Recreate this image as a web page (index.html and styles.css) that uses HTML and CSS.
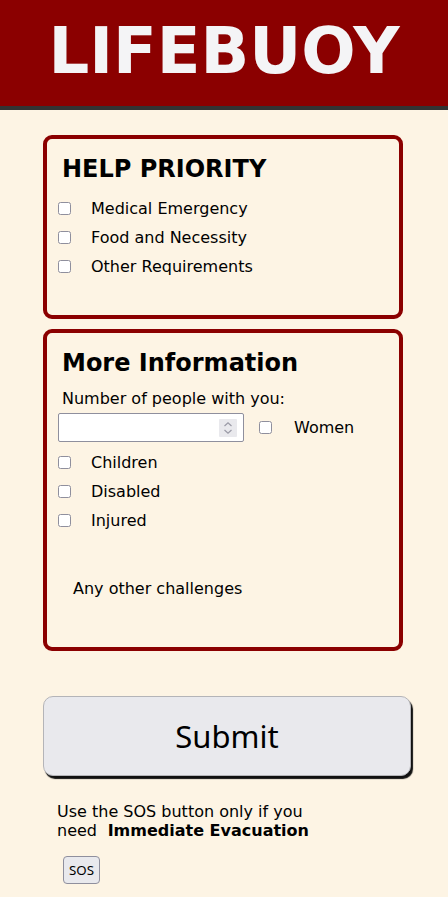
FILE: index.html
```html
<!DOCTYPE html>
<html lang="en">
<head>
<meta charset="utf-8">
<title>Lifebuoy</title>
<link rel="stylesheet" href="styles.css">
</head>
<body>
<div class="app">
<header class="topbar">
  <h1 class="brand">LIFEBUOY</h1>
</header>
<main class="page">
  <section class="card card-priority">
    <h2 class="card-title">HELP PRIORITY</h2>
    <div class="opts opts-first">
      <label class="opt"><input type="checkbox" class="check"><span>Medical Emergency</span></label>
      <label class="opt"><input type="checkbox" class="check"><span>Food and Necessity</span></label>
      <label class="opt"><input type="checkbox" class="check"><span>Other Requirements</span></label>
    </div>
  </section>
  <section class="card card-info">
    <h2 class="card-title">More Information</h2>
    <label class="field-label" for="people">Number of people with you:</label>
    <div class="people-row">
      <span class="num-wrap">
        <input id="people" type="number" class="num">
        <span class="spin" aria-hidden="true">
          <svg width="18" height="18" viewBox="0 0 18 18"><path d="M5.5 7 L9 3.8 L12.5 7 M5.5 11 L9 14.2 L12.5 11" fill="none" stroke="#9a9aa6" stroke-width="1.2"/></svg>
        </span>
      </span>
      <label class="opt opt-inline"><input type="checkbox" class="check"><span>Women</span></label>
    </div>
    <div class="opts opts-more">
      <label class="opt"><input type="checkbox" class="check"><span>Children</span></label>
      <label class="opt"><input type="checkbox" class="check"><span>Disabled</span></label>
      <label class="opt"><input type="checkbox" class="check"><span>Injured</span></label>
    </div>
    <p class="challenges">Any other challenges</p>
  </section>
  <button class="submit" type="button">Submit</button>
  <p class="sos-note">Use the SOS button only if you need&nbsp;<b> Immediate Evacuation</b></p>
  <button class="sos" type="button">SOS</button>
</main>
</div>
</body>
</html>
```

FILE: styles.css
```css
html, body {
  margin: 0;
  padding: 0;
  height: 100%;
}

body {
  background: #fdf4e4;
  font-family: "DejaVu Sans", sans-serif;
  font-size: 16px;
  color: #000;
}

.app {
  height: 100vh;
  overflow-y: auto;
}

.topbar {
  background: #8b0000;
  border-bottom: 4px solid #333333;
  height: 92px;
  padding-top: 14px;
}

.brand {
  margin: 0;
  text-align: center;
  font-family: "DejaVu Sans", sans-serif;
  font-weight: bold;
  font-size: 64px;
  line-height: 75px;
  color: #f4f4f6;
}

.page {
  padding: 25px 37px 57px 43px;
}

.card {
  width: 360px;
  box-sizing: border-box;
  border: 4px solid #8b0000;
  border-radius: 9px;
  padding: 16px 0 0 11px;
}

.card-priority {
  padding-bottom: 34px;
  margin-bottom: 10px;
}

.card-info {
  padding-bottom: 49.6px;
}

.card-title {
  margin: 0 0 0 4px;
  font-size: 24px;
  font-weight: bold;
}

.opts {
  display: flex;
  flex-direction: column;
}

.opts-first {
  margin-top: 11px;
}

.opts-more {
  margin-top: 6.5px;
}

.opt {
  display: flex;
  align-items: center;
  gap: 20px;
  height: 29px;
}

.check {
  -webkit-appearance: none;
  appearance: none;
  margin: 0;
  flex: none;
  width: 13px;
  height: 13px;
  box-sizing: border-box;
  border: 1.5px solid #8f8f9d;
  border-radius: 2.5px;
  background: #ffffff;
}

.field-label {
  display: block;
  margin: 11.5px 0 0 4px;
}

.people-row {
  display: flex;
  align-items: center;
  margin-top: 5px;
}

.num-wrap {
  position: relative;
  display: block;
  flex: none;
}

.num {
  display: block;
  width: 186px;
  height: 29px;
  box-sizing: border-box;
  margin: 0;
  padding: 4px 28px 4px 3px;
  border: 1px solid #8f8f9d;
  border-radius: 2px;
  background: #ffffff;
  font-family: "DejaVu Sans", sans-serif;
  font-size: 13.333px;
}

.num::-webkit-inner-spin-button,
.num::-webkit-outer-spin-button {
  -webkit-appearance: none;
  margin: 0;
}

.spin {
  position: absolute;
  right: 7px;
  top: 6px;
  width: 18px;
  height: 18px;
  background: #e9e9ed;
  border-radius: 1px;
}

.spin svg {
  display: block;
}

.opt-inline {
  margin-left: 15px;
  gap: 22px;
}

.challenges {
  margin: 43.8px 0 0 15px;
}

.submit {
  display: block;
  width: 368px;
  height: 80px;
  margin: 0;
  margin-top: 44.3px;
  background: #e9e9ed;
  border: 1px solid #b4b4b8;
  border-radius: 10px;
  box-shadow: 2px 3px 1px #111111;
  font-family: "Noto Sans", "Open Sans", sans-serif;
  font-size: 31px;
  color: #000;
}

.sos-note {
  width: 262px;
  margin: 26.5px 0 16px 14px;
  line-height: 19px;
}

.sos {
  display: block;
  margin-left: 20px;
  width: 37px;
  height: 28px;
  padding: 0;
  background: #e9e9ed;
  border: 1px solid #8f8f9d;
  border-radius: 4px;
  font-family: "Noto Sans", "Open Sans", sans-serif;
  font-size: 13.333px;
  color: #000;
}
```
